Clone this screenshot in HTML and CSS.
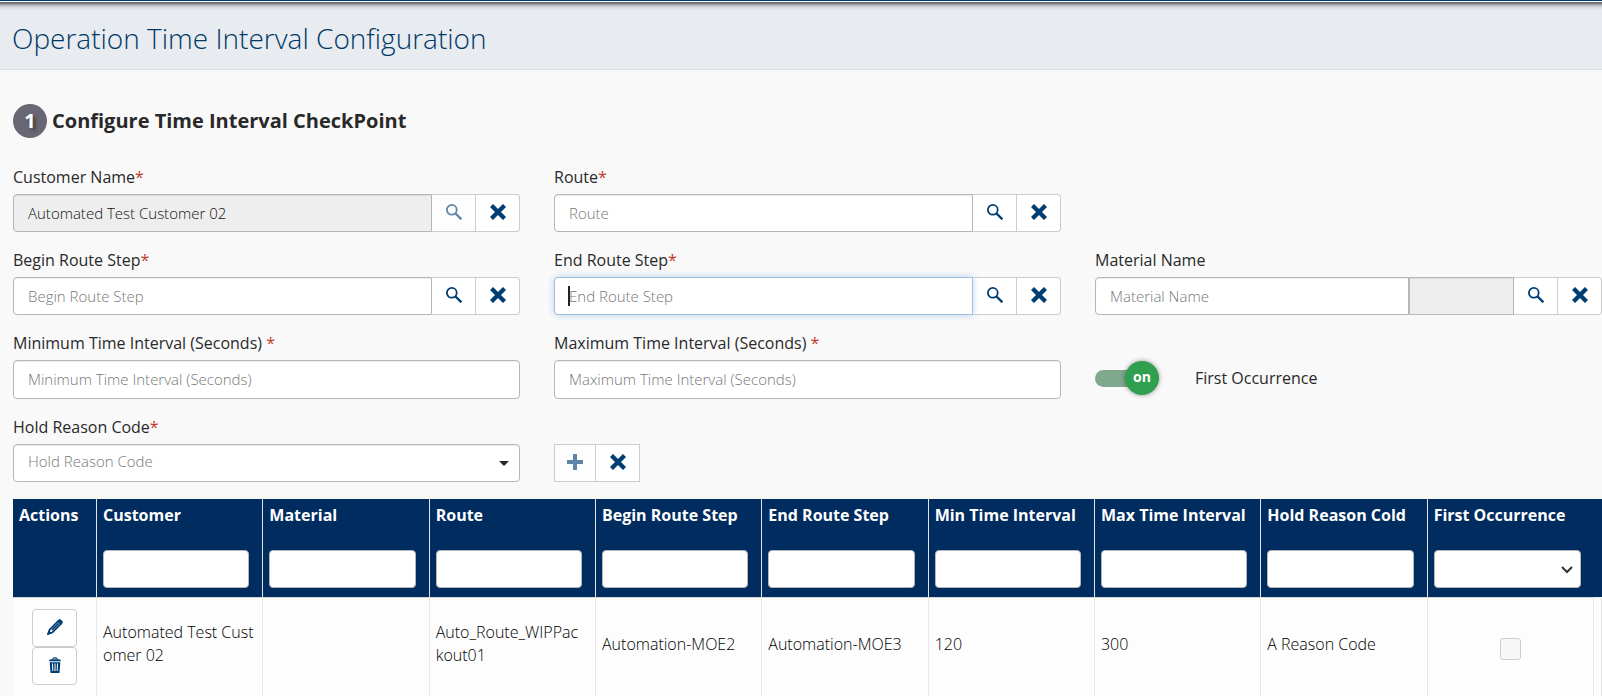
FILE: index.html
```html
<!DOCTYPE html>
<html lang="en">
<head>
<meta charset="utf-8">
<title>Operation Time Interval Configuration</title>
<link rel="stylesheet" href="styles.css">
</head>
<body>
<svg class="sprite" aria-hidden="true">
  <symbol id="i-search" viewBox="0 0 16 16"><circle cx="5.800" cy="5.800" r="4.900" fill="none" stroke="currentColor" stroke-width="1.800"/><path d="M9.300 9.300l6 6" fill="none" stroke="currentColor" stroke-width="2.300"/></symbol>
  <symbol id="i-clear" viewBox="0 0 16 16"><path d="M1.500 1.500l13 13M14.500 1.500l-13 13" fill="none" stroke="currentColor" stroke-width="4.300"/></symbol>
  <symbol id="i-plus" viewBox="0 0 16 16"><path d="M8 0v16M0 8h16" fill="none" stroke="currentColor" stroke-width="4"/></symbol>
  <symbol id="i-pencil" viewBox="0 0 16 16"><path d="M11 2.200L13.800 5 5.600 13.200 1.300 14.700 2.800 10.400zM5 11l6.600-6.600" fill="none" stroke="currentColor" stroke-width="1.700"/><path d="M0 16l1.600-5 3.400 3.400zM10.600 1.800L12 .4q.8-.6 1.700 0l1.900 1.900q.6.900 0 1.700l-1.400 1.400z" fill="currentColor"/></symbol>
  <symbol id="i-trash" viewBox="0 0 16 16"><path d="M5.500 1.500Q8 .2 10.500 1.500" fill="none" stroke="currentColor" stroke-width="1.400"/><path d="M2 4.200Q2 2.200 4 2.200h8q2 0 2 2zM2.700 5.200h10.600L12.500 16h-9z" fill="currentColor"/><path d="M5.500 6.500l.3 7.500M8 6.500v7.500M10.500 6.500l-.3 7.500" fill="none" stroke="#fff" stroke-width="1"/></symbol>
</svg>

<header class="page-header"><h1 class="page-title">Operation Time Interval Configuration</h1></header>

<main class="content">
  <h2 class="step"><span class="step-number">1</span>Configure Time Interval CheckPoint</h2>

  <form class="form">
    <div class="field">
      <label class="label" for="customer">Customer Name<span class="required">*</span></label>
      <div class="group">
        <input class="control" id="customer" type="text" value="Automated Test Customer 02" disabled>
        <button class="btn" type="button" aria-label="Search customer" disabled><svg class="icon"><use href="#i-search"/></svg></button>
        <button class="btn" type="button" aria-label="Clear customer"><svg class="icon"><use href="#i-clear"/></svg></button>
      </div>
    </div>
    <div class="field">
      <label class="label" for="route">Route<span class="required">*</span></label>
      <div class="group">
        <input class="control" id="route" type="text" placeholder="Route">
        <button class="btn" type="button" aria-label="Search route"><svg class="icon"><use href="#i-search"/></svg></button>
        <button class="btn" type="button" aria-label="Clear route"><svg class="icon"><use href="#i-clear"/></svg></button>
      </div>
    </div>
    <div class="field field-start">
      <label class="label" for="begin">Begin Route Step<span class="required">*</span></label>
      <div class="group">
        <input class="control" id="begin" type="text" placeholder="Begin Route Step">
        <button class="btn" type="button" aria-label="Search begin route step"><svg class="icon"><use href="#i-search"/></svg></button>
        <button class="btn" type="button" aria-label="Clear begin route step"><svg class="icon"><use href="#i-clear"/></svg></button>
      </div>
    </div>
    <div class="field">
      <label class="label" for="end">End Route Step<span class="required">*</span></label>
      <div class="group">
        <input class="control" id="end" type="text" placeholder="End Route Step" autofocus>
        <span class="text-cursor" aria-hidden="true"></span>
        <button class="btn" type="button" aria-label="Search end route step"><svg class="icon"><use href="#i-search"/></svg></button>
        <button class="btn" type="button" aria-label="Clear end route step"><svg class="icon"><use href="#i-clear"/></svg></button>
      </div>
    </div>
    <div class="field">
      <label class="label" for="material">Material Name</label>
      <div class="group">
        <input class="control" id="material" type="text" placeholder="Material Name">
        <input class="control control-extra" type="text" aria-label="Material revision" disabled>
        <button class="btn" type="button" aria-label="Search material"><svg class="icon"><use href="#i-search"/></svg></button>
        <button class="btn" type="button" aria-label="Clear material"><svg class="icon"><use href="#i-clear"/></svg></button>
      </div>
    </div>
    <div class="field field-start">
      <label class="label" for="min">Minimum Time Interval (Seconds) <span class="required">*</span></label>
      <input class="control control-single" id="min" type="text" placeholder="Minimum Time Interval (Seconds)">
    </div>
    <div class="field">
      <label class="label" for="max">Maximum Time Interval (Seconds) <span class="required">*</span></label>
      <input class="control control-single" id="max" type="text" placeholder="Maximum Time Interval (Seconds)">
    </div>
    <label class="toggle">
      <input class="toggle-input" type="checkbox" checked>
      <span class="toggle-track"><span class="toggle-knob">on</span></span>
      <span>First Occurrence</span>
    </label>
    <div class="field field-start">
      <label class="label" for="reason">Hold Reason Code<span class="required">*</span></label>
      <div class="select-wrap">
        <select class="control select" id="reason"><option>Hold Reason Code</option></select>
        <svg class="caret" viewBox="0 0 10 5"><path d="M0 0h10L5 5z" fill="currentColor"/></svg>
      </div>
    </div>
    <div class="form-actions">
      <button class="btn" type="button" aria-label="Add" disabled><svg class="icon"><use href="#i-plus"/></svg></button>
      <button class="btn" type="button" aria-label="Clear form"><svg class="icon"><use href="#i-clear"/></svg></button>
    </div>
  </form>

  <table class="grid">
    <colgroup><col class="col-actions"><col><col><col><col><col><col><col><col><col><col class="col-scroll"></colgroup>
    <thead>
      <tr>
        <th>Actions</th>
        <th>Customer<input class="filter" type="text" aria-label="Filter customer"></th>
        <th>Material<input class="filter" type="text" aria-label="Filter material"></th>
        <th>Route<input class="filter" type="text" aria-label="Filter route"></th>
        <th>Begin Route Step<input class="filter" type="text" aria-label="Filter begin route step"></th>
        <th>End Route Step<input class="filter" type="text" aria-label="Filter end route step"></th>
        <th>Min Time Interval<input class="filter" type="text" aria-label="Filter min time interval"></th>
        <th>Max Time Interval<input class="filter" type="text" aria-label="Filter max time interval"></th>
        <th>Hold Reason Cold<input class="filter" type="text" aria-label="Filter hold reason"></th>
        <th class="last"><span>First Occurrence</span><span class="filter-wrap"><select class="filter filter-select" aria-label="Filter first occurrence"><option></option></select><svg class="chevron" viewBox="0 0 12 8"><path d="M1 1l5 5 5-5" fill="none" stroke="currentColor" stroke-width="2"/></svg></span></th>
        <th class="last"></th>
      </tr>
    </thead>
    <tbody>
      <tr>
        <td class="actions">
          <button class="row-btn" type="button" aria-label="Edit"><svg class="icon"><use href="#i-pencil"/></svg></button>
          <button class="row-btn" type="button" aria-label="Delete"><svg class="icon"><use href="#i-trash"/></svg></button>
        </td>
        <td>Automated Test Customer 02</td>
        <td></td>
        <td>Auto_Route_WIPPac<br>kout01</td>
        <td>Automation-MOE2</td>
        <td>Automation-MOE3</td>
        <td>120</td>
        <td>300</td>
        <td>A Reason Code</td>
        <td class="check-cell"><input class="check" type="checkbox" aria-label="First occurrence" disabled></td>
        <td class="scroll-cell"></td>
      </tr>
    </tbody>
  </table>
</main>
</body>
</html>
```

FILE: styles.css
```css
* {
  box-sizing: border-box;
}

body {
  margin: 0;
  background: #f9f9f9;
  color: #292929;
  font-family: "Open Sans", "Noto Sans", sans-serif;
  font-size: 16px;
  line-height: 23px;
}

button, input, select {
  font: inherit;
  color: inherit;
}

.sprite {
  position: absolute;
  width: 0;
  height: 0;
}

.page-header {
  padding: 20px 12px 14px;
  border-top: 1px solid #003a70;
  border-bottom: 1px solid #dcdfe6;
  background: linear-gradient(#fff 1px, #625f69 1px, #85848c 3px, #b5b7bd 4px, #d5d8dd 6px, #e8ebf0 9px);
}

.page-title {
  margin: 0;
  color: #003a66;
  font-size: 28px;
  font-weight: 300;
  line-height: 34px;
}

.content {
  padding: 34px 0 0 13px;
}

.step {
  display: flex;
  align-items: center;
  gap: 5px;
  margin: 0 0 28px;
  font-size: 20px;
  font-weight: 700;
  line-height: 34px;
}

.step-number {
  width: 34px;
  height: 34px;
  border-radius: 50%;
  background: #696773;
  color: #fff;
  text-align: center;
  text-shadow: 3px 3px 3px #444;
}

.form {
  display: grid;
  grid-template-columns: repeat(3, minmax(0, 1fr));
  gap: 17px 34px;
  margin-bottom: 17px;
}

.field-start {
  grid-column: 1;
}

.label {
  display: block;
  margin-bottom: 5px;
  font-weight: 500;
}

.required {
  color: #c0392b;
}

.group, .form-actions {
  display: flex;
  position: relative;
}

.control {
  display: block;
  width: 100%;
  height: 38px;
  min-width: 0;
  padding: 0 14px;
  border: 1px solid #b4b6b9;
  border-radius: 4px;
  background: #fff;
  box-shadow: inset 0 1px 1px #00000013;
  font-size: 15px;
  font-weight: 300;
  outline: none;
}

.control-single {
  height: 39px;
  padding-bottom: 2px;
}

.control::placeholder {
  color: #777;
  opacity: 1;
}

.control:disabled {
  background: #eee;
  color: #111;
}

.group .control {
  flex: 1;
  border-radius: 4px 0 0 4px;
}

.group .control-extra {
  flex: 0 0 105px;
  border-radius: 0;
}

.control:focus {
  z-index: 1;
  border-color: #9fbfdd;
  box-shadow: 0 0 7px #b5d3ef;
  caret-color: transparent;
}

.text-cursor {
  display: none;
  position: absolute;
  top: 9px;
  left: 14px;
  width: 2px;
  height: 20px;
  background: #222;
}

.control:focus:placeholder-shown + .text-cursor {
  display: block;
  z-index: 2;
}

.btn {
  display: flex;
  align-items: center;
  justify-content: center;
  width: 44px;
  height: 38px;
  padding: 0 0 3px;
  border: 1px solid #ccc;
  border-left-width: 0;
  background: #fff;
  color: #003d73;
}

.group .btn:last-child {
  border-radius: 0 4px 4px 0;
}

.btn:disabled {
  background: #fdfdfd;
  color: #5f84aa;
}

.form-actions {
  align-self: end;
}

.form-actions .btn:first-child {
  width: 42px;
  border-left-width: 1px;
}

.icon {
  width: 16px;
  height: 16px;
}

.select-wrap, .filter-wrap {
  display: block;
  position: relative;
}

.select {
  padding-bottom: 3px;
  appearance: none;
  color: #777;
}

.caret {
  position: absolute;
  top: 17px;
  right: 11px;
  width: 10px;
  height: 5px;
  color: #292929;
  pointer-events: none;
}

.toggle {
  display: flex;
  align-items: center;
  align-self: end;
  gap: 36px;
  height: 42px;
  font-weight: 500;
}

.toggle-input {
  position: absolute;
  opacity: 0;
}

.toggle-track {
  display: flex;
  align-items: center;
  justify-content: flex-end;
  width: 64px;
  height: 17px;
  border-radius: 9px;
  background: #80a88c;
}

.toggle-knob {
  width: 34px;
  height: 34px;
  border-radius: 50%;
  background: #309f50;
  box-shadow: 0 0 5px #0006;
  color: #fff;
  font-size: 14px;
  font-weight: 700;
  line-height: 32px;
  text-align: center;
}

.grid {
  width: 100%;
  table-layout: fixed;
  border-collapse: separate;
  border-spacing: 0;
}

.col-actions {
  width: 84px;
}

.col-scroll {
  width: 8px;
}

.grid th {
  height: 98px;
  padding: 5px 13px 9px 6px;
  border-right: 1px solid #e1e4e8;
  background: #002c5f;
  color: #fff;
  font-weight: 700;
  text-align: left;
  vertical-align: top;
  white-space: nowrap;
}

.grid th.last {
  border-right: 0;
}

.filter {
  display: block;
  width: 100%;
  height: 38px;
  margin-top: 23px;
  padding: 0 12px;
  border: 1px solid #b4b6b9;
  border-radius: 4px;
  background: #fff;
}

.filter-select {
  appearance: none;
}

.chevron {
  position: absolute;
  top: 16px;
  right: 8px;
  width: 12px;
  height: 8px;
  color: #333;
  pointer-events: none;
}

.grid td {
  padding: 0 6px 6px;
  border-top: 1px solid #d5d5d5;
  border-right: 1px solid #e8e8e8;
  background: #fdfdfd;
  color: #000;
  font-weight: 300;
  word-break: break-all;
}

.grid .actions {
  padding: 11px 0 11px 19px;
}

.row-btn {
  display: flex;
  align-items: center;
  justify-content: center;
  width: 45px;
  height: 38px;
  padding: 0 0 2px;
  border: 1px solid #ccc;
  border-radius: 4px;
  background: #fff;
  color: #003d73;
}

.grid .check-cell {
  padding: 4px 0 0;
  text-align: center;
}

.check {
  display: block;
  appearance: none;
  width: 21px;
  height: 22px;
  margin: 0 auto;
  border: 1px solid #ccc;
  border-radius: 3px;
  background: #f7f7f7;
}

.grid .scroll-cell {
  padding: 0;
  border: 2px solid #e4e4e4;
  border-width: 1px 1px 0 0;
  border-radius: 4px 4px 0 0;
}
```
